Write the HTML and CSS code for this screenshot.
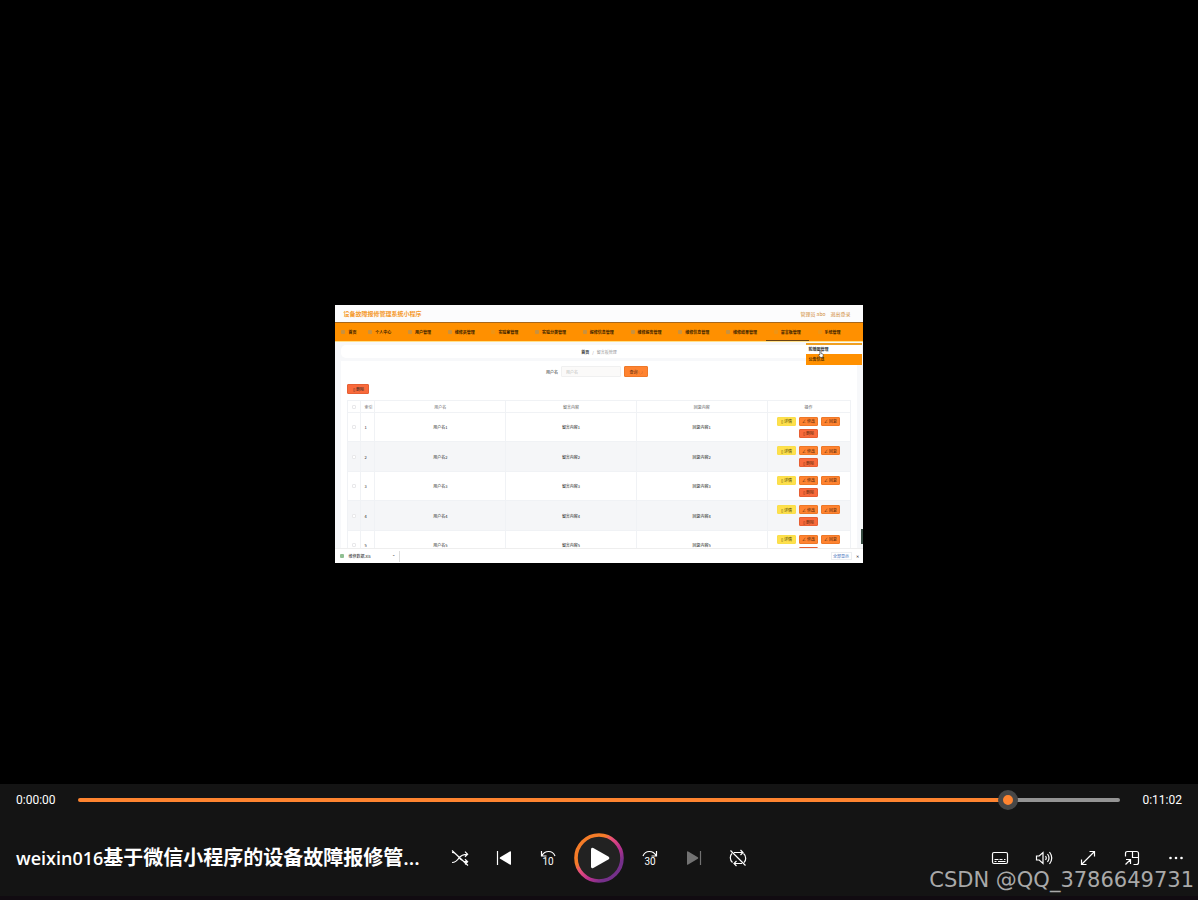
FILE: index.html
```html
<!DOCTYPE html>
<html lang="zh-CN">
<head>
<meta charset="utf-8">
<title>weixin016</title>
<link rel="stylesheet" href="styles.css">
</head>
<body>
<main class="stage">
<div class="frame">
  <header class="site-head"><strong class="site-name">设备故障报修管理系统小程序</strong><span class="account"><span>管理员 abo</span><a href="#">退出登录</a></span></header>
  <nav class="menu">
    <a href="#" class="home"><i class="dot"></i>首页</a>
    <a href="#"><i class="dot"></i>个人中心</a>
    <a href="#"><i class="dot"></i>用户管理</a>
    <a href="#"><i class="dot"></i>维修员管理</a>
    <a href="#"><i class="dot faint"></i>实验室管理</a>
    <a href="#"><i class="dot"></i>实验分类管理</a>
    <a href="#"><i class="dot"></i>报修信息管理</a>
    <a href="#"><i class="dot"></i>维修报告管理</a>
    <a href="#"><i class="dot"></i>维修信息管理</a>
    <a href="#"><i class="dot"></i>维修结果管理</a>
    <a href="#" class="current"><i class="dot faint"></i>留言板管理</a>
    <a href="#"><i class="dot faint"></i>系统管理</a>
  </nav>
  <div class="submenu"><a href="#" class="hover">轮播图管理</a><a href="#">公告信息</a>
    <svg class="pointer" viewBox="0 0 10 14"><path d="M3 8V2q1-2 2 0v4l3 1q1 0 1 2l-1 4H4L1 9q0-2 2-1z" fill="#fff" stroke="#222"/></svg>
  </div>
  <div class="content">
    <div class="crumbs"><b>首页</b><span>/</span><span>留言板管理</span></div>
    <section class="panel">
      <form class="search"><label for="user">用户名</label><input id="user" type="text" placeholder="用户名"><button type="button" class="btn query">查询 ◯</button></form>
      <button type="button" class="btn remove bulk">▯ 删除</button>
      <table class="records">
        <colgroup><col class="c-check"><col class="c-index"><col><col><col><col class="c-ops"></colgroup>
        <thead><tr><th><input type="checkbox" aria-label="全选"></th><th>索引</th><th>用户名</th><th>留言内容</th><th>回复内容</th><th>操作</th></tr></thead>
        <tbody>
          <tr><td><input type="checkbox" aria-label="1"></td><td>1</td><td>用户名1</td><td>留言内容1</td><td>回复内容1</td><td><div class="ops"><button class="btn detail">▯ 详情</button><button class="btn edit">∠ 修改</button><button class="btn edit">∠ 回复</button><button class="btn remove">▯ 删除</button></div></td></tr>
          <tr><td><input type="checkbox" aria-label="2"></td><td>2</td><td>用户名2</td><td>留言内容2</td><td>回复内容2</td><td><div class="ops"><button class="btn detail">▯ 详情</button><button class="btn edit">∠ 修改</button><button class="btn edit">∠ 回复</button><button class="btn remove">▯ 删除</button></div></td></tr>
          <tr><td><input type="checkbox" aria-label="3"></td><td>3</td><td>用户名3</td><td>留言内容3</td><td>回复内容3</td><td><div class="ops"><button class="btn detail">▯ 详情</button><button class="btn edit">∠ 修改</button><button class="btn edit">∠ 回复</button><button class="btn remove">▯ 删除</button></div></td></tr>
          <tr><td><input type="checkbox" aria-label="4"></td><td>4</td><td>用户名4</td><td>留言内容4</td><td>回复内容4</td><td><div class="ops"><button class="btn detail">▯ 详情</button><button class="btn edit">∠ 修改</button><button class="btn edit">∠ 回复</button><button class="btn remove">▯ 删除</button></div></td></tr>
          <tr><td><input type="checkbox" aria-label="5"></td><td>5</td><td>用户名5</td><td>留言内容5</td><td>回复内容5</td><td><div class="ops"><button class="btn detail">▯ 详情</button><button class="btn edit">∠ 修改</button><button class="btn edit">∠ 回复</button><button class="btn remove" aria-label="删除"></button></div></td></tr>
        </tbody>
      </table>
    </section>
    <i class="scroll-mark"></i>
  </div>
  <footer class="downloads"><div class="file"><i class="file-icon"></i><span>维修数据.xls</span><span class="caret">⌃</span></div><button type="button" class="show-all">全部显示</button><button type="button" class="close" aria-label="关闭">✕</button></footer>
</div>
</main>

<section class="player">
  <div class="timeline"><time>0:00:00</time><input class="seek" type="range" min="0" max="1000" value="900" aria-label="进度"><time>0:11:02</time></div>
  <div class="controls">
    <h1 class="title"><span class="latin">weixin016</span>基于微信小程序的设备故障报修管...</h1>
    <div class="transport">
      <button class="icon" aria-label="随机播放"><svg viewBox="0 0 20 20"><path d="M2 4.500c3.500 0 5 2 7 5s4 4.200 8.500 4.200M2 14.500c3.500 0 5-1.500 7-4.500s4-3.700 8.500-3.700M15 3.700l2.600 2.600L15 8.800M15 11.200l2.600 2.500L15 16.200M2 2.500l16 15"/></svg></button>
      <button class="icon" aria-label="上一个"><svg viewBox="0 0 20 20"><path d="M3.500 3v14"/><path class="solid" d="M17 4v12q0 1.300-1.200.6L6.200 10.800q-1-.8 0-1.600l9.600-5.800q1.200-.7 1.200.6z"/></svg></button>
      <button class="icon" aria-label="后退 10 秒"><svg viewBox="0 0 20 20"><path d="M3.500 3v5h5M3.800 7.600C7.200 2 14.500 2.200 17 8"/><text x="10" y="17">10</text></svg></button>
      <button class="play" aria-label="播放"><svg viewBox="0 0 50 50"><defs><linearGradient id="ring" x1="0.15" y1="0.15" x2="0.85" y2="0.85"><stop offset="0.25" stop-color="#f57c28"/><stop offset="0.4" stop-color="#e8507a"/><stop offset="0.65" stop-color="#bd318d"/><stop offset="0.9" stop-color="#75308a"/></linearGradient></defs><circle cx="25" cy="25" r="23" fill="#222" stroke="url(#ring)" stroke-width="3.600"/><path d="M17 16.500q0-2.500 2.300-1.400l15 8.300q2 1.600 0 3.200l-15 8.300Q17 36 17 33.500z" fill="#fff"/></svg></button>
      <button class="icon" aria-label="前进 30 秒"><svg viewBox="0 0 20 20"><path d="M16.500 3v5h-5M16.200 7.600C12.800 2 5.500 2.200 3 8"/><text x="10" y="17">30</text></svg></button>
      <button class="icon dim" aria-label="下一个" disabled><svg viewBox="0 0 20 20"><path d="M16.500 3v14"/><path class="solid" d="M3 4v12q0 1.300 1.200.6l9.600-5.800q1-.8 0-1.600L4.200 3.400Q3 2.700 3 4z"/></svg></button>
      <button class="icon" aria-label="循环"><svg viewBox="0 0 20 20"><path d="M6 4.500h9M12.500 2l2.500 2.500L12.500 7M15.500 5.500C18.500 8 18.200 12.500 16 14.500M14 15.500H6M8.500 13L6 15.500 8.500 18M4.500 14.500C1.500 12 1.800 7.500 4 5.500M2.500 2.500l15 15"/></svg></button>
    </div>
    <div class="extras">
      <button class="icon" aria-label="字幕"><svg viewBox="0 0 20 20"><rect x="2.500" y="4.500" width="15" height="11" rx="1.500"/><path d="M4.500 11.500h4M9.500 11.500h3M14 11.500h1.500M4.500 13.500h2M8 13.500h7.500"/></svg></button>
      <button class="icon" aria-label="音量"><svg viewBox="0 0 20 20"><path d="M2.500 8v4h2.700L9 15.500v-11L5.200 8zM11.500 8q1.500 2 0 4M13.500 6q3 4 0 8M15.500 4q4.500 6 0 12"/></svg></button>
      <button class="icon" aria-label="全屏"><svg viewBox="0 0 20 20"><path d="M11.500 3.500h5v5M16.500 3.500l-13 13M3.500 11.500v5h5"/></svg></button>
      <button class="icon" aria-label="迷你播放器"><svg viewBox="0 0 20 20"><path d="M3.500 8.500v-3q0-2 2-2h9q2 0 2 2v9q0 2-2 2h-3M10.500 3.500v6h6M4 11.500h4.500V16M8.500 11.500l-5 5"/></svg></button>
      <button class="icon" aria-label="更多"><svg viewBox="0 0 20 20"><g class="solid"><circle cx="4.500" cy="10" r="1.300"/><circle cx="10" cy="10" r="1.300"/><circle cx="15.500" cy="10" r="1.300"/></g></svg></button>
    </div>
  </div>
  <div class="watermark">CSDN @QQ_3786649731</div>
</section>
</body>
</html>
```
FILE: styles.css
```css
* { box-sizing: border-box; }
body {
  margin: 0;
  min-height: 100vh;
  display: flex;
  flex-direction: column;
  background: #000;
  color: #fff;
  font-family: "Open Sans", "Noto Sans CJK SC", sans-serif;
}
button { padding: 0; border: 0; background: none; color: inherit; font: inherit; }
a { color: inherit; text-decoration: none; }

.stage {
  flex: 1;
  display: flex;
  justify-content: center;
  align-items: center;
  padding-top: 84px;
}

/* Video frame */
.frame {
  position: relative;
  width: 44%;
  background: #f7f8fa;
  color: #222;
  font: 4px/6px "Noto Sans CJK SC", sans-serif;
}
.site-head {
  display: flex;
  justify-content: space-between;
  align-items: center;
  height: 17px;
  padding: 0 12px 0 8px;
  background: #fcfcfd;
  color: #d08a35;
}
.site-name { font-size: 6px; line-height: 8px; color: #f59a2c; }
.account { display: flex; gap: 5px; font-size: 5px; }
.menu {
  display: flex;
  justify-content: space-between;
  height: 20px;
  padding: 0 22px 0 6px;
  background: #ff9000;
  border-top: 1px solid #a8671a;
  border-bottom: 1px solid #ffe08a;
  color: #3a2200;
  font-weight: 700;
}
.menu a { display: flex; align-items: center; gap: 3px; white-space: nowrap; }
.menu .home { margin-right: -5px; }
.menu .current { margin: 0 -8px; padding: 0 8px; border-bottom: 1px solid #6b4210; }
.dot { width: 4px; height: 4px; border-radius: 1px; background: #c9913f; }
.dot.faint { background: #ef9414; }

.submenu {
  position: absolute;
  z-index: 1;
  top: 38px;
  right: 1px;
  width: 56px;
  border-top: 2px solid #f0a020;
  background: #ff9000;
  color: #4a2a00;
  font-weight: 700;
}
.submenu a { display: block; padding: 2px 3px; line-height: 7px; }
.submenu .hover { padding-top: 1px; padding-bottom: 1px; background: #fff; color: #333; }
.pointer { position: absolute; left: 12px; top: 5px; width: 6px; height: 8px; }

.content { position: relative; height: 206px; overflow: hidden; padding: 3px 6px 0; }
.crumbs {
  display: flex;
  justify-content: center;
  align-items: center;
  gap: 3px;
  height: 13px;
  margin-bottom: 3px;
  border-radius: 5px;
  background: #fff;
  color: #999;
}
.crumbs b { color: #333; }
.panel { padding: 5px 6px 0; background: #fff; }
.search { display: flex; justify-content: center; align-items: center; gap: 3px; height: 11px; margin-bottom: 7px; padding-right: 4px; }
.search input {
  width: 60px;
  height: 11px;
  padding: 0 4px;
  border: 1px solid #f0f0f0;
  border-radius: 1px;
  background: #fbfaf9;
  font: inherit;
}
.search input::placeholder { color: #bbb; }
.btn {
  display: flex;
  justify-content: center;
  align-items: center;
  width: 19px;
  height: 9px;
  border: 1px solid #ee7828;
  border-radius: 1px;
  background: #ff8330;
  color: #57290c;
  font-size: 4px;
  line-height: 6px;
  white-space: nowrap;
}
.query { width: 24px; height: 11px; }
.detail { border-color: #f9df4b; background: #ffe04c; color: #443a00; }
.remove { border-color: #e65f33; background: #f96a3b; }
.bulk { width: 22px; height: 10px; margin-bottom: 6px; color: #222; }

.records { width: 100%; border-collapse: collapse; table-layout: fixed; text-align: center; }
.c-check { width: 13px; }
.c-index { width: 14px; }
.c-ops { width: 83px; }
.records th, .records td { padding: 0; border: 1px solid #f0f2f5; }
.records tr { height: 29px; }
.records tbody tr:nth-child(even) { height: 30px; background: #f5f6f8; }
.records thead tr { height: 12px; color: #666; }
.records th { font-weight: 400; }
.records th:nth-child(2), .records td:nth-child(2) { text-align: left; padding-left: 3px; }
.records input {
  display: block;
  appearance: none;
  width: 4px;
  height: 4px;
  margin: 0 auto;
  border: 1px solid #e8e8ea;
  border-radius: 1px;
  background: #fff;
}
.ops { display: flex; flex-wrap: wrap; justify-content: center; gap: 3px; }
.scroll-mark { position: absolute; right: 0; bottom: 4px; width: 2px; height: 15px; background: #354a40; }

.downloads { display: flex; align-items: center; height: 15px; padding-right: 3px; background: #fff; border-top: 1px solid #eee; }
.file { display: flex; align-items: center; gap: 4px; width: 65px; height: 11px; padding: 0 4px 0 5px; border-right: 1px solid #ddd; margin-right: auto; }
.file-icon { width: 4px; height: 4px; border-radius: 1px; background: #8fbf92; }
.caret { margin-left: auto; }
.show-all { width: 21px; height: 8px; margin-right: 3px; border: 1px solid #eceef1; color: #3568b8; }
.close { width: 5px; }

/* Player bar */
.player { position: relative; height: 116px; background: #141414; border-bottom: 4px solid #110b11; }
.timeline { display: flex; align-items: center; gap: 22px; height: 32px; padding: 0 16px; font: 12px Roboto, sans-serif; }
.seek { flex: 1; min-width: 0; height: 20px; margin: 0; appearance: none; background: none; }
.seek::-webkit-slider-runnable-track {
  height: 4px;
  border-radius: 2px;
  background: linear-gradient(90deg, #ff8430 89%, #949494 89%);
}
.seek::-webkit-slider-thumb {
  appearance: none;
  width: 20px;
  height: 20px;
  margin-top: -8px;
  border: 5px solid #474747;
  border-radius: 50%;
  background: #ff8430;
}
.controls { display: grid; grid-template-columns: minmax(0, 1fr) auto minmax(0, 1fr); align-items: center; height: 84px; }
.title {
  margin: 0;
  padding-left: 16px;
  overflow: hidden;
  font-size: 20px;
  font-weight: 600;
  line-height: 28px;
  white-space: nowrap;
  text-overflow: ellipsis;
}
.latin { font-size: 18px; }
.transport, .extras { display: flex; align-items: center; }
.extras { justify-content: flex-end; }
.icon { display: grid; place-items: center; width: 44px; height: 44px; }
.icon svg { width: 20px; height: 20px; fill: none; stroke: #fff; stroke-width: 1.2; }
.icon .solid { fill: #fff; stroke: none; }
.icon text { fill: #fff; stroke: none; font: 10px Roboto, sans-serif; text-anchor: middle; }
.dim { opacity: 0.4; }
.play { display: grid; place-items: center; width: 58px; height: 50px; }
.play svg { width: 50px; height: 50px; }
.watermark {
  position: absolute;
  right: 4px;
  bottom: 3px;
  color: #a9a9a9;
  font: 21px/25px "DejaVu Sans", sans-serif;
}
```
